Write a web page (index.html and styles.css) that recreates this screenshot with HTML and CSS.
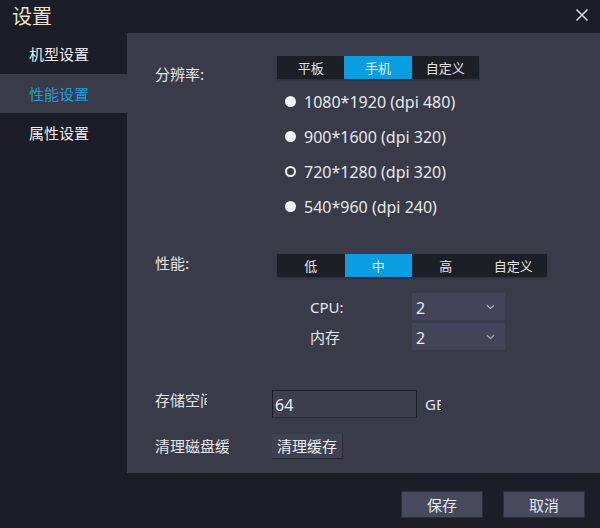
FILE: index.html
```html
<!DOCTYPE html>
<html lang="zh">
<head>
<meta charset="utf-8">
<link rel="stylesheet" href="styles.css">
</head>
<body>
<div class="win">
  <header class="titlebar">
    <span class="title">设置</span>
    <svg class="close" width="14" height="14" viewBox="0 0 14 14"><path d="M1.5 1.5L12.5 12.5M12.5 1.5L1.5 12.5" stroke="#d8d8dc" stroke-width="1.6" fill="none"/></svg>
  </header>
  <div class="body">
    <nav class="side">
      <div class="nav-item">机型设置</div>
      <div class="nav-item active">性能设置</div>
      <div class="nav-item">属性设置</div>
    </nav>
    <main class="panel">
      <div class="row res-row">
        <div class="label lbl-res">分辨率:</div>
        <div class="tabs tabs3">
          <div class="tab">平板</div>
          <div class="tab on">手机</div>
          <div class="tab">自定义</div>
        </div>
      </div>
      <ul class="radios">
        <li><span class="dot"></span>1080*1920 (dpi 480)</li>
        <li><span class="dot"></span>900*1600 (dpi 320)</li>
        <li><span class="dot ring"></span>720*1280 (dpi 320)</li>
        <li><span class="dot"></span>540*960 (dpi 240)</li>
      </ul>
      <div class="row perf-row">
        <div class="label lbl-perf">性能:</div>
        <div class="tabs tabs4">
          <div class="tab">低</div>
          <div class="tab on">中</div>
          <div class="tab">高</div>
          <div class="tab">自定义</div>
        </div>
      </div>
      <div class="sub">
        <div class="sub-row">
          <span class="sub-label">CPU:</span>
          <div class="select"><span>2</span><svg width="9" height="6" viewBox="0 0 9 6"><path d="M1 1.2L4.5 4.5L8 1.2" stroke="#a8abb8" stroke-width="1.2" fill="none"/></svg></div>
        </div>
        <div class="sub-row">
          <span class="sub-label">内存</span>
          <div class="select"><span>2</span><svg width="9" height="6" viewBox="0 0 9 6"><path d="M1 1.2L4.5 4.5L8 1.2" stroke="#a8abb8" stroke-width="1.2" fill="none"/></svg></div>
        </div>
      </div>
      <div class="row store-row">
        <div class="label lbl-store"><span class="clip clip-store">存储空间</span></div>
        <div class="input">64</div>
        <span class="clip unit">GB</span>
      </div>
      <div class="row clean-row">
        <div class="label lbl-clean"><span class="clip clip-clean">清理磁盘缓存</span></div>
        <button class="btn-clean">清理缓存</button>
      </div>
    </main>
  </div>
  <footer class="footer">
    <button class="btn">保存</button>
    <button class="btn">取消</button>
  </footer>
</div>
</body>
</html>
```

FILE: styles.css
```css
* { box-sizing: border-box; }
html, body { margin: 0; padding: 0; }
body {
  width: 600px;
  height: 528px;
  background: #1c1d26;
  color: #e4e5ea;
  font-family: "Noto Sans", "Noto Sans CJK SC", sans-serif;
  overflow: hidden;
}
.win { display: flex; flex-direction: column; height: 528px; }
.titlebar {
  height: 33px;
  display: flex;
  align-items: center;
  justify-content: space-between;
  padding: 0 12px 2px 12px;
}
.title {
  font-family: "Noto Sans CJK SC", sans-serif;
  font-size: 20px;
  color: #ebe4c6;
  line-height: 24px;
}
.close { margin-top: -1px; margin-right: -1px; }
.body { display: flex; height: 440px; }
.side { width: 127px; padding-top: 1px; }
.nav-item {
  height: 39.5px;
  line-height: 39px;
  padding-left: 29px;
  font-family: "Noto Sans CJK SC", sans-serif;
  font-size: 15px;
  color: #eceef2;
}
.nav-item.active { background: #393c48; color: #1a9fd4; }
.panel {
  flex: 1;
  background: #393c48;
  padding: 23px 0 0 28px;
}
.row { display: flex; align-items: flex-start; }
.label {
  width: 122px;
  font-family: "Noto Sans CJK SC", sans-serif;
  font-size: 15px;
  line-height: 20px;
  color: #e4e5ea;
}
.lbl-res { padding-top: 8px; }
.lbl-perf { margin-top: -1px; }
.tabs {
  display: flex;
  height: 23px;
  background: #1d1f27;
  box-shadow: 0 1px 2px rgba(0,0,0,0.25);
}
.tabs3 { width: 202px; }
.tabs4 { width: 270px; }
.tab {
  flex: 1;
  text-align: center;
  line-height: 23px;
  font-family: "Noto Sans CJK SC", sans-serif;
  font-size: 13px;
  color: #e2e3e8;
}
.tab.on { background: #0b9de2; color: #dff2fc; }
.radios {
  list-style: none;
  margin: 0 0 0 130px;
  padding: 0;
}
.radios li {
  height: 35px;
  display: flex;
  align-items: center;
  font-size: 16px;
  color: #e6e7ec;
}
.dot {
  width: 11px;
  height: 11px;
  border-radius: 50%;
  background: #f2f3f6;
  margin-right: 8px;
}
.dot.ring { background: transparent; border: 2px solid #eef0f3; }
.perf-row { margin-top: 30px; }
.sub {
  margin: 16px 0 0 155px;
}
.sub-row { display: flex; align-items: center; margin-bottom: 3px; }
.sub-label {
  width: 102px;
  font-family: "Noto Sans", "Noto Sans CJK SC", sans-serif;
  font-size: 15px;
  color: #e4e5ea;
}
.select {
  width: 93px;
  height: 27px;
  background: #42455a;
  display: flex;
  align-items: center;
  justify-content: space-between;
  padding: 0 10px 0 4px;
  font-size: 16px;
  color: #e8e9ee;
}
.select span { margin-top: 2px; }
.store-row { margin-top: 40px; }
.lbl-store { width: 117px; }
.clip { display: inline-block; overflow: hidden; white-space: nowrap; vertical-align: top; }
.clip-store { width: 52px; }
.clip-clean { width: 74px; }
.input {
  width: 145px;
  height: 28px;
  background: #3c3f4e;
  border: 1px solid #1c1e26;
  border-bottom-color: #2a2c36;
  padding: 0 0 0 2px;
  font-size: 16px;
  line-height: 28px;
  color: #eeeff3;
}
.unit {
  width: 16px;
  margin-left: 8px;
  font-size: 15px;
  line-height: 28px;
  color: #e4e5ea;
}
.clean-row { margin-top: 15px; }
.lbl-clean { width: 117px; padding-top: 3px; }
.btn-clean {
  width: 71px;
  height: 25px;
  padding: 0;
  background: #3f4252;
  border: none;
  border-bottom: 1px solid #23252e;
  border-right: 1px solid #2b2d37;
  font-family: "Noto Sans CJK SC", sans-serif;
  font-size: 15px;
  color: #eceef2;
  line-height: 24px;
  margin-top: 1px;
}
.footer {
  display: flex;
  justify-content: flex-end;
  gap: 20px;
  padding: 18px 15px 0 0;
}
.btn {
  width: 82px;
  height: 27px;
  padding: 0;
  background: #464a5c;
  border: 1px solid #2c2e3a;
  font-family: "Noto Sans CJK SC", sans-serif;
  font-size: 15px;
  color: #e6e7ec;
  line-height: 24px;
}
```
